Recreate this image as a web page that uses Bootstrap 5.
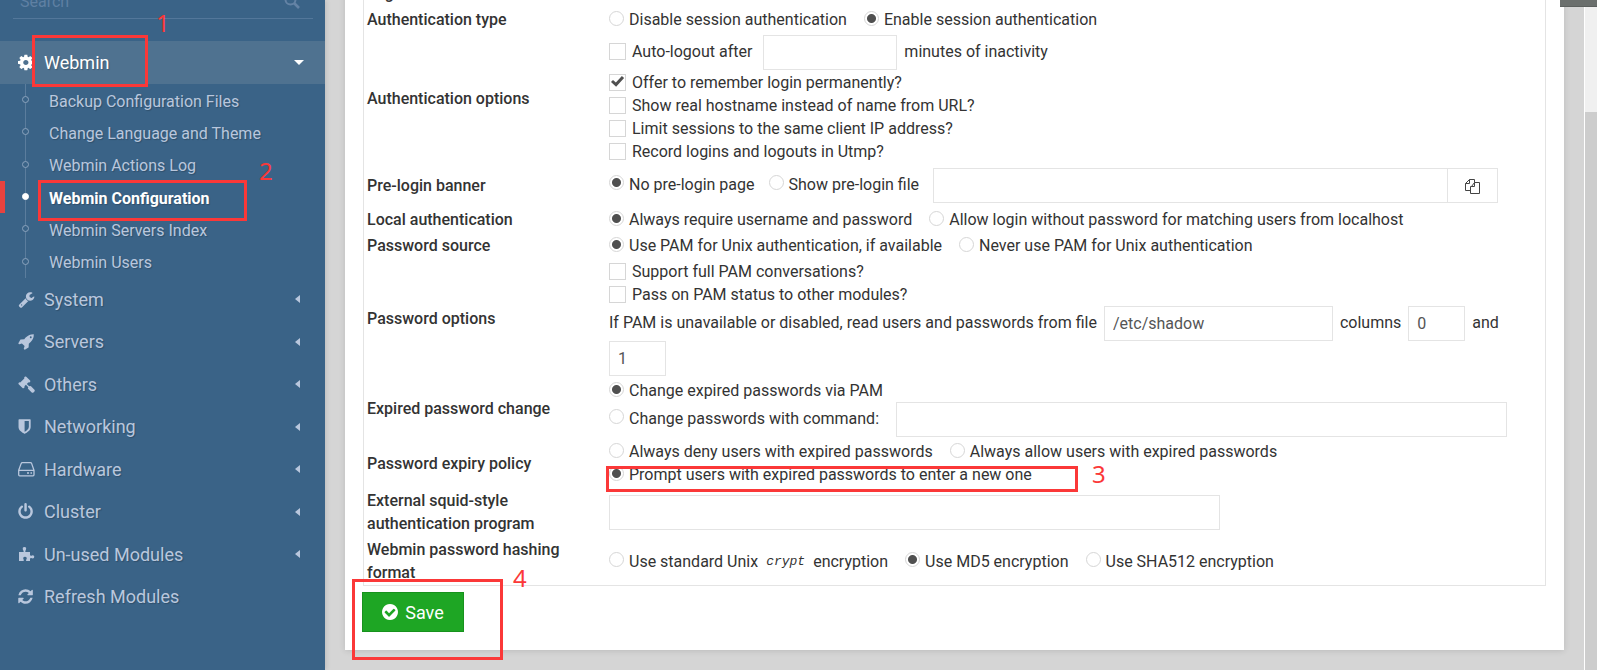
<!DOCTYPE html>
<html lang="en">
<head>
<meta charset="utf-8">
<meta name="viewport" content="width=device-width, initial-scale=1">
<title>Webmin Configuration</title>
<link rel="stylesheet" href="https://cdn.jsdelivr.net/npm/bootstrap@5.3.0/dist/css/bootstrap.min.css">
<style>
:root { --ink:#333; --line:#e4e4e4; --side:#3a6387; --side-text:#b9c7dd; --red:#fb3838; }
body { font-family: Roboto, "Open Sans", sans-serif; font-size:16px; line-height:23px; color:var(--ink); background:#d5d5d5; }
button, input { font-family:inherit; }

/* sidebar */
.side { width:325px; background:var(--side); color:var(--side-text); box-shadow:1px 0 5px rgba(0,0,0,.12); text-shadow:1px 1px 1px rgba(0,0,0,.2); }
.side a { color:inherit; text-decoration:none; }
.search-box { margin:-12px 12px 22px 13px; height:31px; border-bottom:1px solid #53779a; padding:0 13px 4px 7px; color:#6483a5; }
.search-box input { background:none; border:0; outline:0; padding:0; font-size:16px; color:inherit; min-width:0; }
.search-box input::placeholder { color:#5f80a3; opacity:1; }
.side-link { font-size:18px; padding:0 24px 0 18px; }
.side-link svg.glyph { width:17px; height:17px; margin-right:9px; fill:currentColor; }
.side-link.open { height:43px; background:#4f7290; color:#fff; }
.caret-left { border:4px solid transparent; border-left:0; border-right:5px solid currentColor; margin-right:1px; }
.caret-down { border:5px solid transparent; border-bottom:0; border-top-color:currentColor; margin-right:-3px; }
.sub-list { height:194px; }
.sub-list::before { content:""; position:absolute; left:25px; top:0; bottom:0; width:1px; background:#5b7d9d; }
.sub-list a { padding:2px 0 0 49px; flex:1 1 0; font-size:16px; }
.sub-list a::before { content:""; position:absolute; left:22px; top:50%; margin-top:-4px; width:7px; height:7px; border:1px solid #8ba3bd; border-radius:50%; background:var(--side); }
.sub-list a.current { color:#fff; font-weight:700; }
.sub-list a.current::before { background:#fff; border-color:#fff; }
.sub-list a.current::after { content:""; position:absolute; left:0; top:0; bottom:0; width:5px; background:#e8423f; }
.top-list { height:340px; }
.top-list a { flex:1 1 0; }

/* settings panel */
main { flex:1 1 0; min-width:0; }
.panel { margin:0 20px 19px 20px; padding:0 18px 18px; background:#fff; box-shadow:0 1px 6px rgba(0,0,0,.12); }
.settings { width:100%; margin-top:-21px; border:1px solid var(--line); table-layout:fixed; border-collapse:separate; border-spacing:0; }
.settings th { width:245px; padding:2px 4px 1px 3px; font-weight:500; vertical-align:middle; }
.settings td { padding:2px 2px 1px 0; vertical-align:middle; }
.opts { display:flex; flex-wrap:wrap; align-items:center; column-gap:17px; min-height:23px; }
.opts.with-box { min-height:37px; }
.opts.with-picker { min-height:39px; }
.opts.words { column-gap:7px; }
.opts.with-file { column-gap:14px; }
.opts label { display:inline-flex; align-items:center; }
.opts.lifted label { padding-bottom:3px; }
.opts input[type=radio], .opts input[type=checkbox] { appearance:none; flex:none; margin:0; background:#fff; border:1px solid #d6d6d6; }
.opts input[type=radio] { width:15px; height:15px; border-radius:50%; margin:0 5px 3px 0; }
.opts input[type=radio]:checked { background:radial-gradient(circle, #505050 0 4px, #fff 5px); }
.opts input[type=checkbox] { width:17px; height:17px; margin-right:6px; }
.opts input[type=checkbox]:checked { background:#fff url("data:image/svg+xml,%3Csvg xmlns='http://www.w3.org/2000/svg' viewBox='0 0 15 15'%3E%3Cpath d='M2 6l4 3.6L13 2' fill='none' stroke='%23505050' stroke-width='3'/%3E%3C/svg%3E") center/15px no-repeat; }
.box { height:35px; border:1px solid var(--line); border-radius:0; padding:0 8px; font-size:16px; color:#555; background:#fff; max-width:100%; outline:0; }
.w-tiny { width:57px; } .w-short { width:134px; } .w-mid { width:229px; } .w-long { width:611px; } .w-file { width:515px; }
.pick { width:51px; margin-left:-1px; padding:0; color:#444; }
.settings code { font-family:"Liberation Mono", monospace; font-style:italic; font-size:13px; color:var(--ink); margin:0 8px; }
.btn-save { height:40px; width:102px; margin-top:6px; margin-left:-1px; padding:0; border-radius:0; font-size:18px; color:#fff; background:#1ea624; border:1px solid #17921d; }
.btn-save:hover { color:#fff; background:#17921d; }
.btn-save svg { width:16px; height:16px; margin-right:7px; fill:#fff; }

/* scroll rail and window tab at the right */
.rail { width:13px; background:#f0f0f0; border-left:1px solid #fff; padding-top:112px; }
.rail div { background:#cdcdcd; }
.corner { top:0; right:0; width:37px; height:7px; background:#6b6f6d; border-bottom:1px solid #5c605e; }

/* red step marks lying over the page */
.step { position:absolute; border:3px solid var(--red); pointer-events:none; z-index:3; }
.step b { position:absolute; color:var(--red); font:24px/24px "Noto Sans", sans-serif; text-shadow:none; }
.step1 { left:32px; top:-6px; width:116px; height:52px; } .step1 b { left:121px; top:-27px; }
.step2 { left:38px; top:-1px; width:209px; height:41px; } .step2 b { left:218px; top:-24px; }
.step3 { left:-3px; top:3px; width:472px; height:26px; } .step3 b { left:483px; top:-7px; }
.step4 { left:-11px; top:-7px; width:151px; height:81px; } .step4 b { left:158px; top:-16px; }
</style>
<script src="https://cdn.jsdelivr.net/npm/bootstrap@5.3.0/dist/js/bootstrap.bundle.min.js"></script>
</head>
<body>
<div class="d-flex min-vh-100 position-relative overflow-hidden">
  <nav class="side flex-shrink-0" aria-label="Modules">
    <div class="search-box d-flex align-items-center">
      <input class="flex-grow-1" type="search" placeholder="Search" aria-label="Search">
      <svg width="16" height="16" viewBox="0 0 16 16" fill="none" stroke="currentColor" stroke-width="2"><circle cx="6.5" cy="6.5" r="5"/><path d="M10 10l5 5" stroke-width="2.6"/></svg>
    </div>
    <div class="position-relative">
      <a href="#" class="side-link open d-flex align-items-center">
        <svg class="glyph" viewBox="0 -192 1664 1664"><path d="M1024 640q0-106-75-181t-181-75-181 75-75 181 75 181 181 75 181-75 75-181zm512-109v222q0 12-8 23t-20 13l-185 28q-19 54-39 91 35 50 107 138 10 12 10 25t-9 23q-27 37-99 108t-94 71q-12 0-26-9l-138-108q-44 23-91 38-16 136-29 186-7 28-36 28h-222q-14 0-24.5-8.5t-11.5-21.5l-28-184q-49-16-90-37l-141 107q-10 9-25 9-14 0-25-11-126-114-165-168-7-10-7-23 0-12 8-23 15-21 51-66.5t54-70.5q-27-50-41-99l-183-27q-13-2-21-12.5t-8-23.5v-222q0-12 8-23t19-13l186-28q14-46 39-92-40-57-107-138-10-12-10-24 0-10 9-23 26-36 98.5-107.5t94.5-71.5q13 0 26 10l138 107q44-23 91-38 16-136 29-186 7-28 36-28h222q14 0 24.5 8.5t11.5 21.5l28 184q49 16 90 37l142-107q9-9 24-9 13 0 25 10 129 119 165 170 7 8 7 22 0 12-8 23-15 21-51 66.5t-54 70.5q26 50 41 98l183 28q13 2 21 12.5t8 23.5z"/></svg>
        <span class="flex-grow-1">Webmin</span><i class="caret-down"></i></a>
      <div class="step step1"><b>1</b></div>
    </div>
    <div class="sub-list d-flex flex-column position-relative">
      <a href="#" class="d-flex align-items-center position-relative">Backup Configuration Files</a>
      <a href="#" class="d-flex align-items-center position-relative">Change Language and Theme</a>
      <a href="#" class="d-flex align-items-center position-relative">Webmin Actions Log</a>
      <a href="#" class="d-flex align-items-center position-relative current">Webmin Configuration<span class="step step2"><b>2</b></span></a>
      <a href="#" class="d-flex align-items-center position-relative">Webmin Servers Index</a>
      <a href="#" class="d-flex align-items-center position-relative">Webmin Users</a>
    </div>
    <div class="top-list d-flex flex-column">
      <a href="#" class="side-link d-flex align-items-center"><svg class="glyph" viewBox="0 0 1792 1792"><path d="M448 1472q0-26-19-45t-45-19-45 19-19 45 19 45 45 19 45-19 19-45zm644-420l-682 682q-37 37-90 37-52 0-91-37l-106-108q-38-36-38-90 0-53 38-91l681-681q39 98 114.500 173.500t173.500 114.500zm634-435q0 39-23 106-47 134-164.500 217.500t-258.500 83.500q-185 0-316.500-131.500t-131.500-316.500 131.500-316.500 316.500-131.500q58 0 121.500 16.500t107.500 46.500q16 11 16 28t-16 28l-293 169v224l193 107q5-3 79-48.500t135.500-81 70.500-35.500q15 0 23.500 10t8.500 25z"/></svg><span class="flex-grow-1">System</span><i class="caret-left"></i></a>
      <a href="#" class="side-link d-flex align-items-center"><svg class="glyph" viewBox="0 0 1792 1792"><path d="M1440 448q0-40-28-68t-68-28-68 28-28 68 28 68 68 28 68-28 28-68zm224-288q0 249-75.500 430.500t-253.500 360.500q-81 80-195 176l-20 379q-2 16-16 26l-384 224q-7 4-16 4-12 0-23-9l-64-64q-13-14-8-32l85-276-281-281-276 85q-3 1-9 1-14 0-23-9l-64-64q-17-19-5-39l224-384q10-14 26-16l379-20q96-114 176-195 188-187 358-258t431-71q14 0 24 9.500t10 22.500z"/></svg><span class="flex-grow-1">Servers</span><i class="caret-left"></i></a>
      <a href="#" class="side-link d-flex align-items-center"><svg class="glyph" viewBox="0 0 1792 1792"><path d="M1771 1536q0 53-37 90l-107 108q-39 37-91 37-53 0-90-37l-363-364q-38-36-38-90 0-53 43-96l-256-256-126 126q-14 14-34 14t-34-14q2 2 12.500 12t12.500 13 10 11.500 10 13.500 6 13.500 5.500 16.500 1.500 18q0 38-28 68-3 3-16.500 18t-19 20.500-18.500 16.500-22 15.500-22 9-26 4.500q-40 0-68-28l-408-408q-28-28-28-68 0-13 4.500-26t9-22 15.500-22 16.500-18.500 20.500-19 18-16.500q30-28 68-28 10 0 18 1.500t16.500 5.500 13.500 6 13.500 10 11.500 10 13 12.500 12 12.500q-14-14-14-34t14-34l348-348q14-14 34-14t34 14q-2-2-12.500-12t-12.500-13-10-11.500-10-13.500-6-13.500-5.500-16.500-1.500-18q0-38 28-68 3-3 16.500-18t19-20.500 18.500-16.500 22-15.500 22-9 26-4.500q40 0 68 28l408 408q28 28 28 68 0 13-4.500 26t-9 22-15.500 22-16.500 18.500-20.500 19-18 16.500q-30 28-68 28-10 0-18-1.500t-16.500-5.500-13.500-6-13.500-10-11.500-10-13-12.500-12-12.500q14 14 14 34t-14 34l-126 126 256 256q43-43 96-43 52 0 91 37l363 363q37 39 37 91z"/></svg><span class="flex-grow-1">Others</span><i class="caret-left"></i></a>
      <a href="#" class="side-link d-flex align-items-center"><svg class="glyph" viewBox="200 0 1792 1792"><path d="M1344 960v-640h-448v1137q119-63 213-137 235-184 235-360zm192-768v768q0 86-33.500 170.500t-83 150-118 127.500-126.500 103-121 77.500-89.500 49.500-42.500 20q-12 6-26 6t-26-6q-16-7-42.500-20t-89.500-49.500-121-77.500-126.500-103-118-127.500-83-150-33.500-170.500v-768q0-26 19-45t45-19h1152q26 0 45 19t19 45z"/></svg><span class="flex-grow-1">Networking</span><i class="caret-left"></i></a>
      <a href="#" class="side-link d-flex align-items-center"><svg class="glyph" viewBox="0 0 17 17" style="fill:none" stroke="currentColor" stroke-width="1.300"><path d="M.7 9.300L3.200 2.400Q3.500 1.700 4.300 1.700h8.200q.8 0 1.100.7L16 9.300v4.500q0 1-1 1H1.700q-1 0-1-1zM.7 9.300H16M9 12h2M12.500 12h1.500"/></svg><span class="flex-grow-1">Hardware</span><i class="caret-left"></i></a>
      <a href="#" class="side-link d-flex align-items-center"><svg class="glyph" viewBox="100 0 1792 1792"><path d="M1664 896q0 156-61 298t-164 245-245 164-298 61-298-61-245-164-164-245-61-298q0-182 80.500-343t226.500-270q43-32 95.500-25t83.500 50q32 42 24.500 94.500t-49.500 84.500q-98 74-151.500 181t-53.500 228q0 104 40.500 198.500t109.500 163.500 163.500 109.500 198.500 40.500 198.500-40.500 163.500-109.500 109.500-163.500 40.500-198.500q0-121-53.500-228t-151.500-181q-42-32-49.500-84.500t24.500-94.500q31-43 84-50t95 25q146 109 226.500 270t80.500 343zm-640-768v640q0 52-38 90t-90 38-90-38-38-90v-640q0-52 38-90t90-38 90 38 38 90z"/></svg><span class="flex-grow-1">Cluster</span><i class="caret-left"></i></a>
      <a href="#" class="side-link d-flex align-items-center"><svg class="glyph" viewBox="0 0 17 17"><path d="M1 6h4.600Q6 5 5 3.900 4 1.200 6.400 1 9 1.200 7.800 3.900 7 5 7.400 6H12v3.300q1 .9 2 .1 2.200-.6 2.300 1.400-.2 2.100-2.300 1.500-1-.8-2 .1V15H8.200q-.5-1 .4-1.900.7-2.100-1.600-2.300-2.400.2-1.600 2.300.8 1 .2 1.900H1z"/></svg><span class="flex-grow-1">Un-used Modules</span><i class="caret-left"></i></a>
      <a href="#" class="side-link d-flex align-items-center"><svg class="glyph" viewBox="100 0 1792 1792"><path d="M1639 1056q0 5-1 7-64 268-268 434.500t-478 166.500q-146 0-282.500-55t-243.500-157l-129 129q-19 19-45 19t-45-19-19-45v-448q0-26 19-45t45-19h448q26 0 45 19t19 45-19 45l-137 137q71 66 161 102t187 36q134 0 250-65t186-179q11-17 53-117 8-23 30-23h192q13 0 22.500 9.500t9.500 22.500zm25-800v448q0 26-19 45t-45 19h-448q-26 0-45-19t-19-45 19-45l138-138q-148-137-349-137-134 0-250 65t-186 179q-11 17-53 117-8 23-30 23h-199q-13 0-22.500-9.500t-9.500-22.500v-7q65-268 270-434.500t480-166.500q146 0 284 55.500t245 156.500l130-129q19-19 45-19t45 19 19 45z"/></svg><span>Refresh Modules</span></a>
    </div>
  </nav>

  <main>
    <form class="panel">
      <table class="settings">
        <tr><th scope="row">Log</th><td></td></tr>
        <tr><th scope="row">Authentication type</th><td>
          <div class="opts"><label><input type="radio" name="type">Disable session authentication</label><label><input type="radio" name="type" checked>Enable session authentication</label></div></td></tr>
        <tr><th scope="row">Authentication options</th><td>
          <div class="opts with-box words lifted"><label class="me-1"><input type="checkbox">Auto-logout after</label><input id="idle" class="box w-short" type="text"><label for="idle">minutes of inactivity</label></div>
          <div class="opts"><label><input type="checkbox" checked>Offer to remember login permanently?</label></div>
          <div class="opts"><label><input type="checkbox">Show real hostname instead of name from URL?</label></div>
          <div class="opts"><label><input type="checkbox">Limit sessions to the same client IP address?</label></div>
          <div class="opts"><label><input type="checkbox">Record logins and logouts in Utmp?</label></div></td></tr>
        <tr><th scope="row">Pre-login banner</th><td>
          <div class="opts with-picker with-file lifted"><label><input type="radio" name="banner" checked>No pre-login page</label><label><input type="radio" name="banner">Show pre-login file</label>
            <div class="d-flex"><input class="box w-file" type="text" aria-label="Pre-login file"><button class="box pick" type="button" aria-label="Choose file"><svg width="16" height="16" viewBox="0 0 16 16" fill="none" stroke="currentColor"><path d="M5.500 11.500h-5v-7l4-4h5v3M.500 4.500h4v-4M6.500 7.500l3-4h5v11h-9v-7h4v-4"/></svg></button></div></div></td></tr>
        <tr><th scope="row">Local authentication</th><td>
          <div class="opts"><label><input type="radio" name="local" checked>Always require username and password</label><label><input type="radio" name="local">Allow login without password for matching users from localhost</label></div></td></tr>
        <tr><th scope="row">Password source</th><td>
          <div class="opts"><label><input type="radio" name="source" checked>Use PAM for Unix authentication, if available</label><label><input type="radio" name="source">Never use PAM for Unix authentication</label></div></td></tr>
        <tr><th scope="row">Password options</th><td>
          <div class="opts"><label><input type="checkbox">Support full PAM conversations?</label></div>
          <div class="opts"><label><input type="checkbox">Pass on PAM status to other modules?</label></div>
          <div class="opts words lifted"><label for="pwfile">If PAM is unavailable or disabled, read users and passwords from file</label><input id="pwfile" class="box w-mid" type="text" value="/etc/shadow"><label for="col0">columns</label><input id="col0" class="box w-tiny" type="text" value="0"><label for="col1">and</label><input id="col1" class="box w-tiny" type="text" value="1"></div></td></tr>
        <tr><th scope="row">Expired password change</th><td>
          <div class="opts"><label><input type="radio" name="expired" checked>Change expired passwords via PAM</label></div>
          <div class="opts lifted"><label><input type="radio" name="expired">Change passwords with command:</label><input class="box w-long" type="text" aria-label="Command"></div></td></tr>
        <tr><th scope="row">Password expiry policy</th><td>
          <div class="opts"><label><input type="radio" name="policy">Always deny users with expired passwords</label><label><input type="radio" name="policy">Always allow users with expired passwords</label></div>
          <div class="opts position-relative"><label><input type="radio" name="policy" checked>Prompt users with expired passwords to enter a new one</label><div class="step step3"><b>3</b></div></div></td></tr>
        <tr><th scope="row"><label for="squid">External squid-style authentication program</label></th><td>
          <div class="opts"><input id="squid" class="box w-long" type="text"></div></td></tr>
        <tr><th scope="row">Webmin password hashing format</th><td>
          <div class="opts"><label><input type="radio" name="hash">Use standard Unix <code>crypt</code> encryption</label><label><input type="radio" name="hash" checked>Use MD5 encryption</label><label><input type="radio" name="hash">Use SHA512 encryption</label></div></td></tr>
      </table>
      <div class="position-relative">
        <button class="btn-save d-inline-flex align-items-center justify-content-center" type="button"><svg viewBox="128 128 1536 1536"><path d="M1412 734q0-28-18-46l-91-90q-19-19-45-19t-45 19l-408 407-226-226q-19-19-45-19t-45 19l-91 90q-18 18-18 46 0 27 18 45l362 362q19 19 45 19 27 0 46-19l543-543q18-18 18-45zm252 162q0 209-103 385.500t-279.500 279.500-385.500 103-385.500-103-279.500-279.500-103-385.500 103-385.500 279.500-279.500 385.500-103 385.500 103 279.500 279.500 103 385.500z"/></svg>Save</button>
        <div class="step step4"><b>4</b></div>
      </div>
    </form>
  </main>
  <div class="rail d-flex flex-column flex-shrink-0"><div class="flex-grow-1"></div></div>
  <div class="corner position-absolute"></div>
</div>
</body>
</html>
